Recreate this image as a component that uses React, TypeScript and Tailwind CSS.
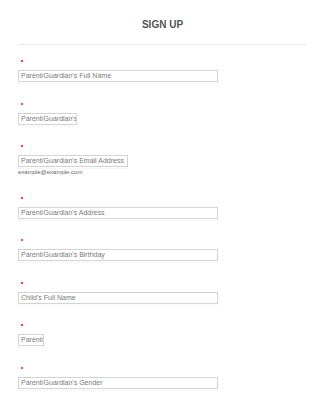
import React from "react";

const fields: { label: string; w: number; helper?: string }[] = [
  { label: "Parent/Guardian's Full Name", w: 200 },
  { label: "Parent/Guardian's Phone Number", w: 59 },
  { label: "Parent/Guardian's Email Address", w: 110, helper: "example@example.com" },
  { label: "Parent/Guardian's Address", w: 200 },
  { label: "Parent/Guardian's Birthday", w: 200 },
  { label: "Child's Full Name", w: 200 },
  { label: "Parent/Guardian's Occupation", w: 26 },
  { label: "Parent/Guardian's Gender", w: 200 },
];

export default function App() {
  return (
    <div
      className="w-[325px] h-[400px] bg-white overflow-hidden"
      style={{ fontFamily: '"Liberation Sans", Arial, sans-serif' }}
    >
      <div className="pt-[20px] flex justify-center">
        <div className="text-[10px] leading-[10px] font-bold text-[#555]">SIGN UP</div>
      </div>
      <div className="mt-[14px] ml-[19px] w-[288px] h-[1px] bg-[#e8e8e8]" />
      <div className="pl-[18px] flex flex-col">
        {fields.map((f, i) => (
          <div key={i} className={`flex flex-col ${i === 0 ? "pt-[15px]" : "pt-[20.5px]"}`}>
            <div className="ml-[3px] w-[2px] h-[2px] bg-[#ff3b3b]" />
            <div className="mt-[8px] relative" style={{ width: f.w }}>
              <div className="h-[12px] border border-[#d4d4d4] bg-white overflow-hidden whitespace-nowrap pl-[2px] text-[7px] leading-[10px] text-[#7a7a7a]">
                {f.label}
              </div>
              <div className="absolute left-0 right-0 top-[13px] border-b border-dotted border-[#eeeeee]" />
            </div>
            {f.helper && (
              <div className="mt-[1px] text-[6px] leading-[8px] text-[#666]">{f.helper}</div>
            )}
          </div>
        ))}
      </div>
    </div>
  );
}
